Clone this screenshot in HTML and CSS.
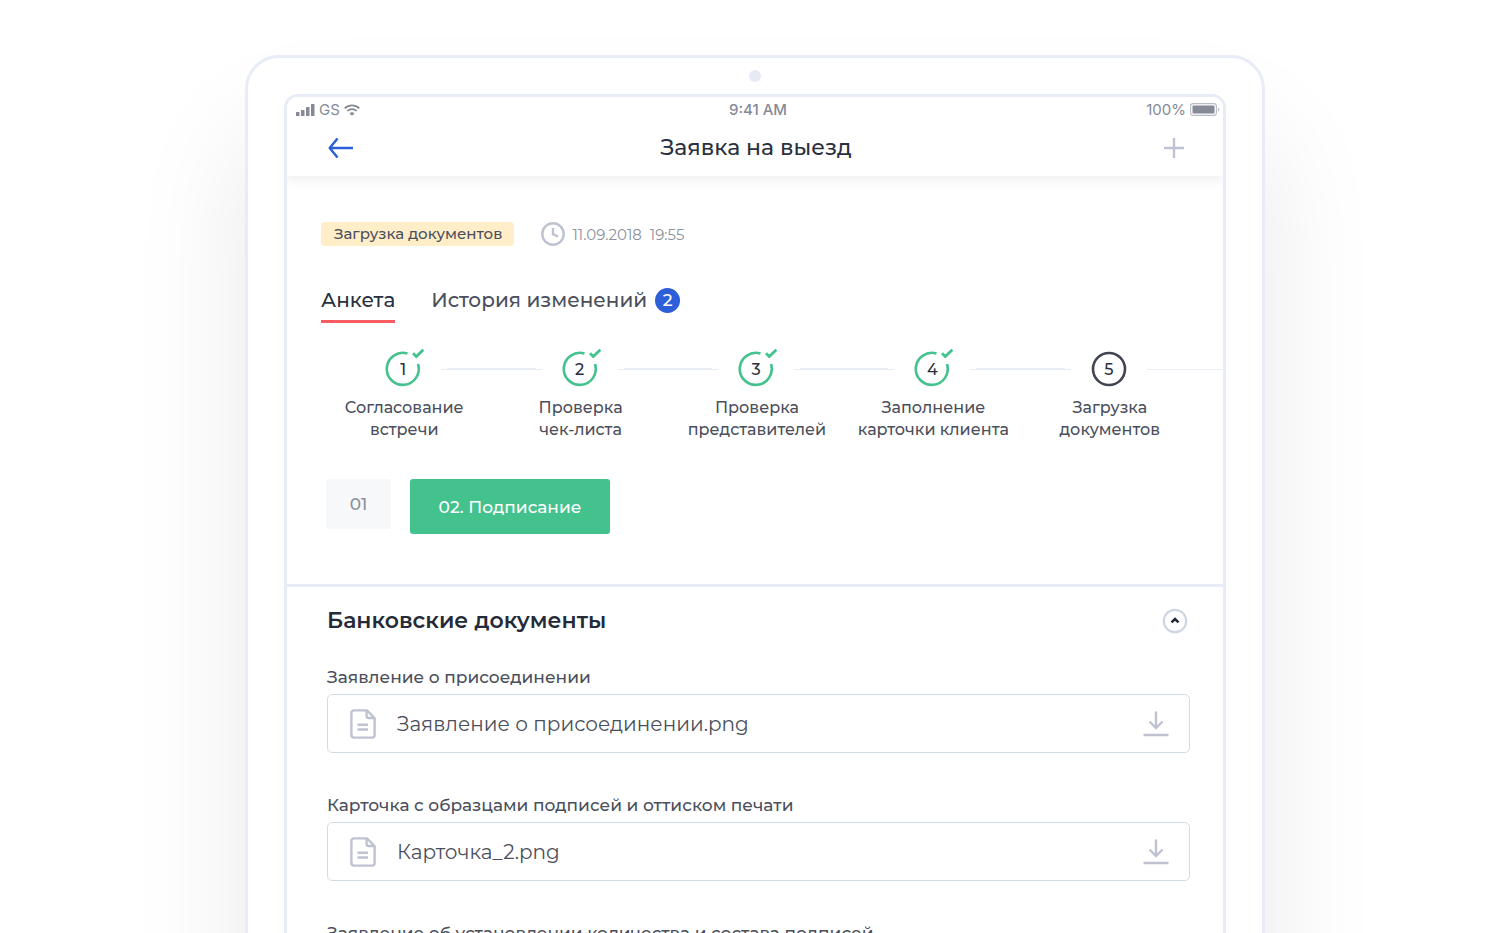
FILE: index.html
```html
<!DOCTYPE html>
<html lang="ru">
<head>
<meta charset="utf-8">
<meta name="viewport" content="width=device-width, initial-scale=1">
<title>Заявка на выезд</title>
<link rel="stylesheet" href="styles.css">
</head>
<body>
<svg class="sprite" aria-hidden="true">
  <symbol id="i-done" viewBox="0 0 48 48"><path d="M28.500 8.600A16 16 0 1 0 39 19" fill="none" stroke="#43c28d" stroke-width="2.600"/><path d="M34 8.300l3.300 3.200 7-6.800" fill="none" stroke="#43c28d" stroke-width="2.800"/></symbol>
  <symbol id="i-file" viewBox="0 0 26 30"><path d="M4 1.400h13L24.600 9v17a2.600 2.600 0 0 1-2.600 2.600H4A2.600 2.600 0 0 1 1.400 26V4A2.600 2.600 0 0 1 4 1.400zM16.600 1.600v5.400a2 2 0 0 0 2 2h5.600M7.500 15.700h10.500M7.500 20.500h10.500" fill="none" stroke="#bfc3d1" stroke-width="2.400" stroke-linejoin="round"/></symbol>
  <symbol id="i-load" viewBox="0 0 26 26"><path d="M13 .5v15.500M6.500 10.500L13 17l6.500-6.500M.5 24h25" fill="none" stroke="#bfc3d1" stroke-width="2.400"/></symbol>
</svg>
<div class="stage">
  <div class="device">
    <div class="camera"></div>
    <main class="screen">
      <div class="top">
        <div class="status">
          <div class="carrier">
            <svg width="19" height="12" viewBox="0 0 19 12" fill="#868a96"><rect y="8" width="3.500" height="4" rx=".6"/><rect x="5" y="6" width="3.500" height="6" rx=".6"/><rect x="10" y="3" width="3.500" height="9" rx=".6"/><rect x="15" width="3.500" height="12" rx=".6"/></svg>
            <span>GS</span>
            <svg width="16" height="12" viewBox="0 0 16 12" fill="none" stroke="#868a96" stroke-width="1.700"><path d="M.7 4.300a10.500 10.500 0 0 1 14.600 0M3.300 7a6.700 6.700 0 0 1 9.400 0"/><path d="M8 11.800L5.500 9.400a3.600 3.600 0 0 1 5 0z" fill="#868a96" stroke="none"/></svg>
          </div>
          <div class="clock">9:41 AM</div>
          <div class="power">
            <span>100%</span>
            <svg width="30" height="13" viewBox="0 0 30 13"><rect x=".6" y=".6" width="25.800" height="11.800" rx="2.600" fill="none" stroke="#b9bcc4" stroke-width="1.100"/><rect x="2.500" y="2.500" width="22" height="8" rx="1" fill="#868a96"/><path d="M28 4.500v4q1.400-.6 1.400-2t-1.400-2z" fill="#b9bcc4"/></svg>
          </div>
        </div>
        <header class="nav">
          <button class="icon-button" aria-label="Назад"><svg width="26" height="22" viewBox="0 0 26 22" fill="none" stroke="#2d5fd9" stroke-width="2.500" stroke-linejoin="round"><path d="M25 11H2M9.500 1.500L1.700 11l7.800 9.500"/></svg></button>
          <h1>Заявка на выезд</h1>
          <button class="icon-button" aria-label="Добавить"><svg width="20" height="20" viewBox="0 0 20 20" stroke="#bfc3d1" stroke-width="2.400"><path d="M10 0v20M0 10h20"/></svg></button>
        </header>
      </div>
      <section class="summary">
        <div class="meta">
          <span class="tag">Загрузка документов</span>
          <svg width="24" height="24" viewBox="0 0 24 24" fill="none" stroke="#bfc3d1" stroke-width="2.400"><circle cx="12" cy="12" r="10.700"/><path d="M12 6v6.200l5 2.300"/></svg>
          <time datetime="2018-09-11T19:55">11.09.2018&nbsp; 19:55</time>
        </div>
        <nav class="tabs">
          <a class="tab current" href="#form">Анкета</a>
          <a class="tab" href="#history">История изменений <span class="count">2</span></a>
        </nav>
        <ol class="steps">
          <li class="step done"><div class="track"><span class="dot"><svg><use href="#i-done"/></svg><b>1</b></span></div><p>Согласование<br>встречи</p></li>
          <li class="step done"><div class="track"><span class="dot"><svg><use href="#i-done"/></svg><b>2</b></span></div><p>Проверка<br>чек-листа</p></li>
          <li class="step done"><div class="track"><span class="dot"><svg><use href="#i-done"/></svg><b>3</b></span></div><p>Проверка<br>представителей</p></li>
          <li class="step done"><div class="track"><span class="dot"><svg><use href="#i-done"/></svg><b>4</b></span></div><p>Заполнение<br>карточки клиента</p></li>
          <li class="step"><div class="track"><span class="dot"><svg viewBox="0 0 48 48"><circle cx="24" cy="24" r="16" fill="none" stroke="#414552" stroke-width="2.600"/></svg><b>5</b></span></div><p>Загрузка<br>документов</p></li>
        </ol>
        <div class="stages">
          <button class="stage-button">01</button>
          <button class="stage-button active">02. Подписание</button>
        </div>
      </section>
      <section class="documents">
        <div class="heading">
          <h2>Банковские документы</h2>
          <button class="icon-button" aria-label="Свернуть"><svg width="26" height="26" viewBox="0 0 26 26" fill="none"><circle cx="13" cy="13" r="11.200" stroke="#ced7e1" stroke-width="2.200"/><path d="M9.500 14.400L13 11l3.500 3.400" stroke="#202736" stroke-width="2.500"/></svg></button>
        </div>
        <article class="document">
          <h3>Заявление о присоединении</h3>
          <div class="file"><svg class="paper"><use href="#i-file"/></svg><span>Заявление о присоединении.png</span><button class="icon-button" aria-label="Скачать"><svg class="load"><use href="#i-load"/></svg></button></div>
        </article>
        <article class="document">
          <h3>Карточка с образцами подписей и оттиском печати</h3>
          <div class="file"><svg class="paper"><use href="#i-file"/></svg><span>Карточка_2.png</span><button class="icon-button" aria-label="Скачать"><svg class="load"><use href="#i-load"/></svg></button></div>
        </article>
        <article class="document">
          <h3>Заявление об установлении количества и состава подписей</h3>
        </article>
      </section>
    </main>
  </div>
</div>
</body>
</html>
```
FILE: styles.css
```css
* { box-sizing: border-box; }
body { margin: 0; background: #fff; color: #4b4f5c; font-family: Montserrat, Inter, "Noto Sans", sans-serif; font-weight: 400; }
h1, h2, h3, p, ol { margin: 0; padding: 0; }
ol { list-style: none; }
svg { display: block; flex: none; }
button { font: inherit; border: 0; cursor: pointer; }
.sprite { display: none; }
.icon-button { padding: 0; background: none; }

.stage { height: 100vh; overflow: hidden; padding: 55px 0 0 10px; }
.device { width: 1020px; max-width: 96%; min-height: 140vh; margin: 0 auto; padding: 0 36px; border: 3px solid #e8ecf6; border-radius: 34px; background: #fff; box-shadow: 0 80px 120px rgba(0, 0, 0, .09); }
.camera { width: 12px; height: 12px; margin: 12px auto; border-radius: 50%; background: #e6eaf5; }
.screen { min-height: 140vh; border: 3px solid #e8ecf6; border-radius: 14px; overflow: hidden; }

.top { background: #fff; box-shadow: 0 4px 12px rgba(0, 0, 0, .07); }
.status { display: grid; grid-template-columns: 1fr auto 1fr; align-items: center; height: 25px; padding: 0 3px 0 9px; font-family: Inter, sans-serif; font-size: 15px; line-height: 20px; color: #868a96; }
.carrier, .power { display: flex; align-items: center; gap: 4px; }
.power { justify-content: flex-end; }
.clock { font-weight: 500; }
.nav { display: grid; grid-template-columns: 1fr auto 1fr; align-items: center; height: 54px; padding: 0 39px 2px 41px; }
.nav .icon-button:last-child { justify-self: end; }
.nav h1 { font-size: 22px; line-height: 28px; font-weight: 500; color: #2a303e; }

.summary { padding: 46px 0 50px 34px; border-bottom: 3px solid #e8ecf6; }
.meta { display: flex; align-items: center; height: 24px; font-size: 15px; }
.tag { padding: 0 12px 0 13px; margin-right: 27px; border-radius: 4px; background: #ffeec8; line-height: 24px; font-weight: 500; }
.meta time { margin-left: 7px; color: #8c909c; }
.tabs { display: flex; gap: 36px; margin-top: 38px; }
.tab { display: flex; align-items: center; gap: 8px; height: 39px; padding-bottom: 7px; color: #4b4f5c; font-size: 20px; font-weight: 500; line-height: 30px; text-decoration: none; }
.tab.current { color: #2a303e; border-bottom: 3px solid #fa5c5f; padding-bottom: 4px; }
.count { width: 25px; height: 25px; border-radius: 50%; background: #2d5fd9; color: #fff; font-size: 17px; line-height: 25px; text-align: center; }

.steps { display: grid; grid-template-columns: repeat(5, 1fr); margin: 22px 26px 0 -6px; text-align: center; }
.track { display: flex; align-items: center; height: 48px; }
.track::before, .track::after { content: ""; flex: 1; height: 2px; background: linear-gradient(#e8ecf6, #e8ecf6) 0 100% / 100% 1px no-repeat, linear-gradient(#e8ecf6, #e8ecf6) 0 0 / calc(100% - 6px) 1px no-repeat; }
.track::after { background-position: 0 100%, 100% 0; }
.step:first-child .track::before { visibility: hidden; }
.step:last-child .track { margin-right: -26px; }
.step:last-child .track::after { height: 1px; flex: 1 0 26px; }
.step:last-child .track::before { flex: 1 1 0; }
.dot { display: grid; place-items: center; width: 48px; height: 48px; margin: 0 14px; }
.dot svg, .dot b { grid-area: 1 / 1; }
.dot svg { width: 48px; height: 48px; }
.dot b { font-size: 16px; font-weight: 500; color: #2a303e; }
.step p { font-size: 16px; line-height: 22px; font-weight: 500; padding: 4px 0 0 2px; }

.stages { display: flex; align-items: flex-start; gap: 19px; margin: 38px 0 0 5px; }
.stage-button { width: 65px; height: 50px; border-radius: 3px; background: #f7f8fa; color: #8c909c; font-size: 17px; font-weight: 500; }
.stage-button.active { width: 200px; height: 55px; background: #43c28d; color: #fff; }

.documents { padding: 21px 33px 0 40px; }
.heading { display: flex; align-items: center; justify-content: space-between; height: 26px; padding-right: 2px; }
.heading h2 { font-size: 22px; line-height: 26px; font-weight: 600; color: #242a38; }
.document { margin-top: 31px; }
.document + .document { margin-top: 40px; }
.document h3 { font-size: 17px; line-height: 24px; font-weight: 500; }
.file { display: flex; align-items: center; height: 59px; margin-top: 5px; padding: 0 20px 0 22px; border: 1px solid #d3dce6; border-radius: 5px; font-size: 20px; }
.file span { flex: 1; padding-left: 21px; }
.paper { width: 26px; height: 30px; }
.load { width: 26px; height: 26px; }
```
